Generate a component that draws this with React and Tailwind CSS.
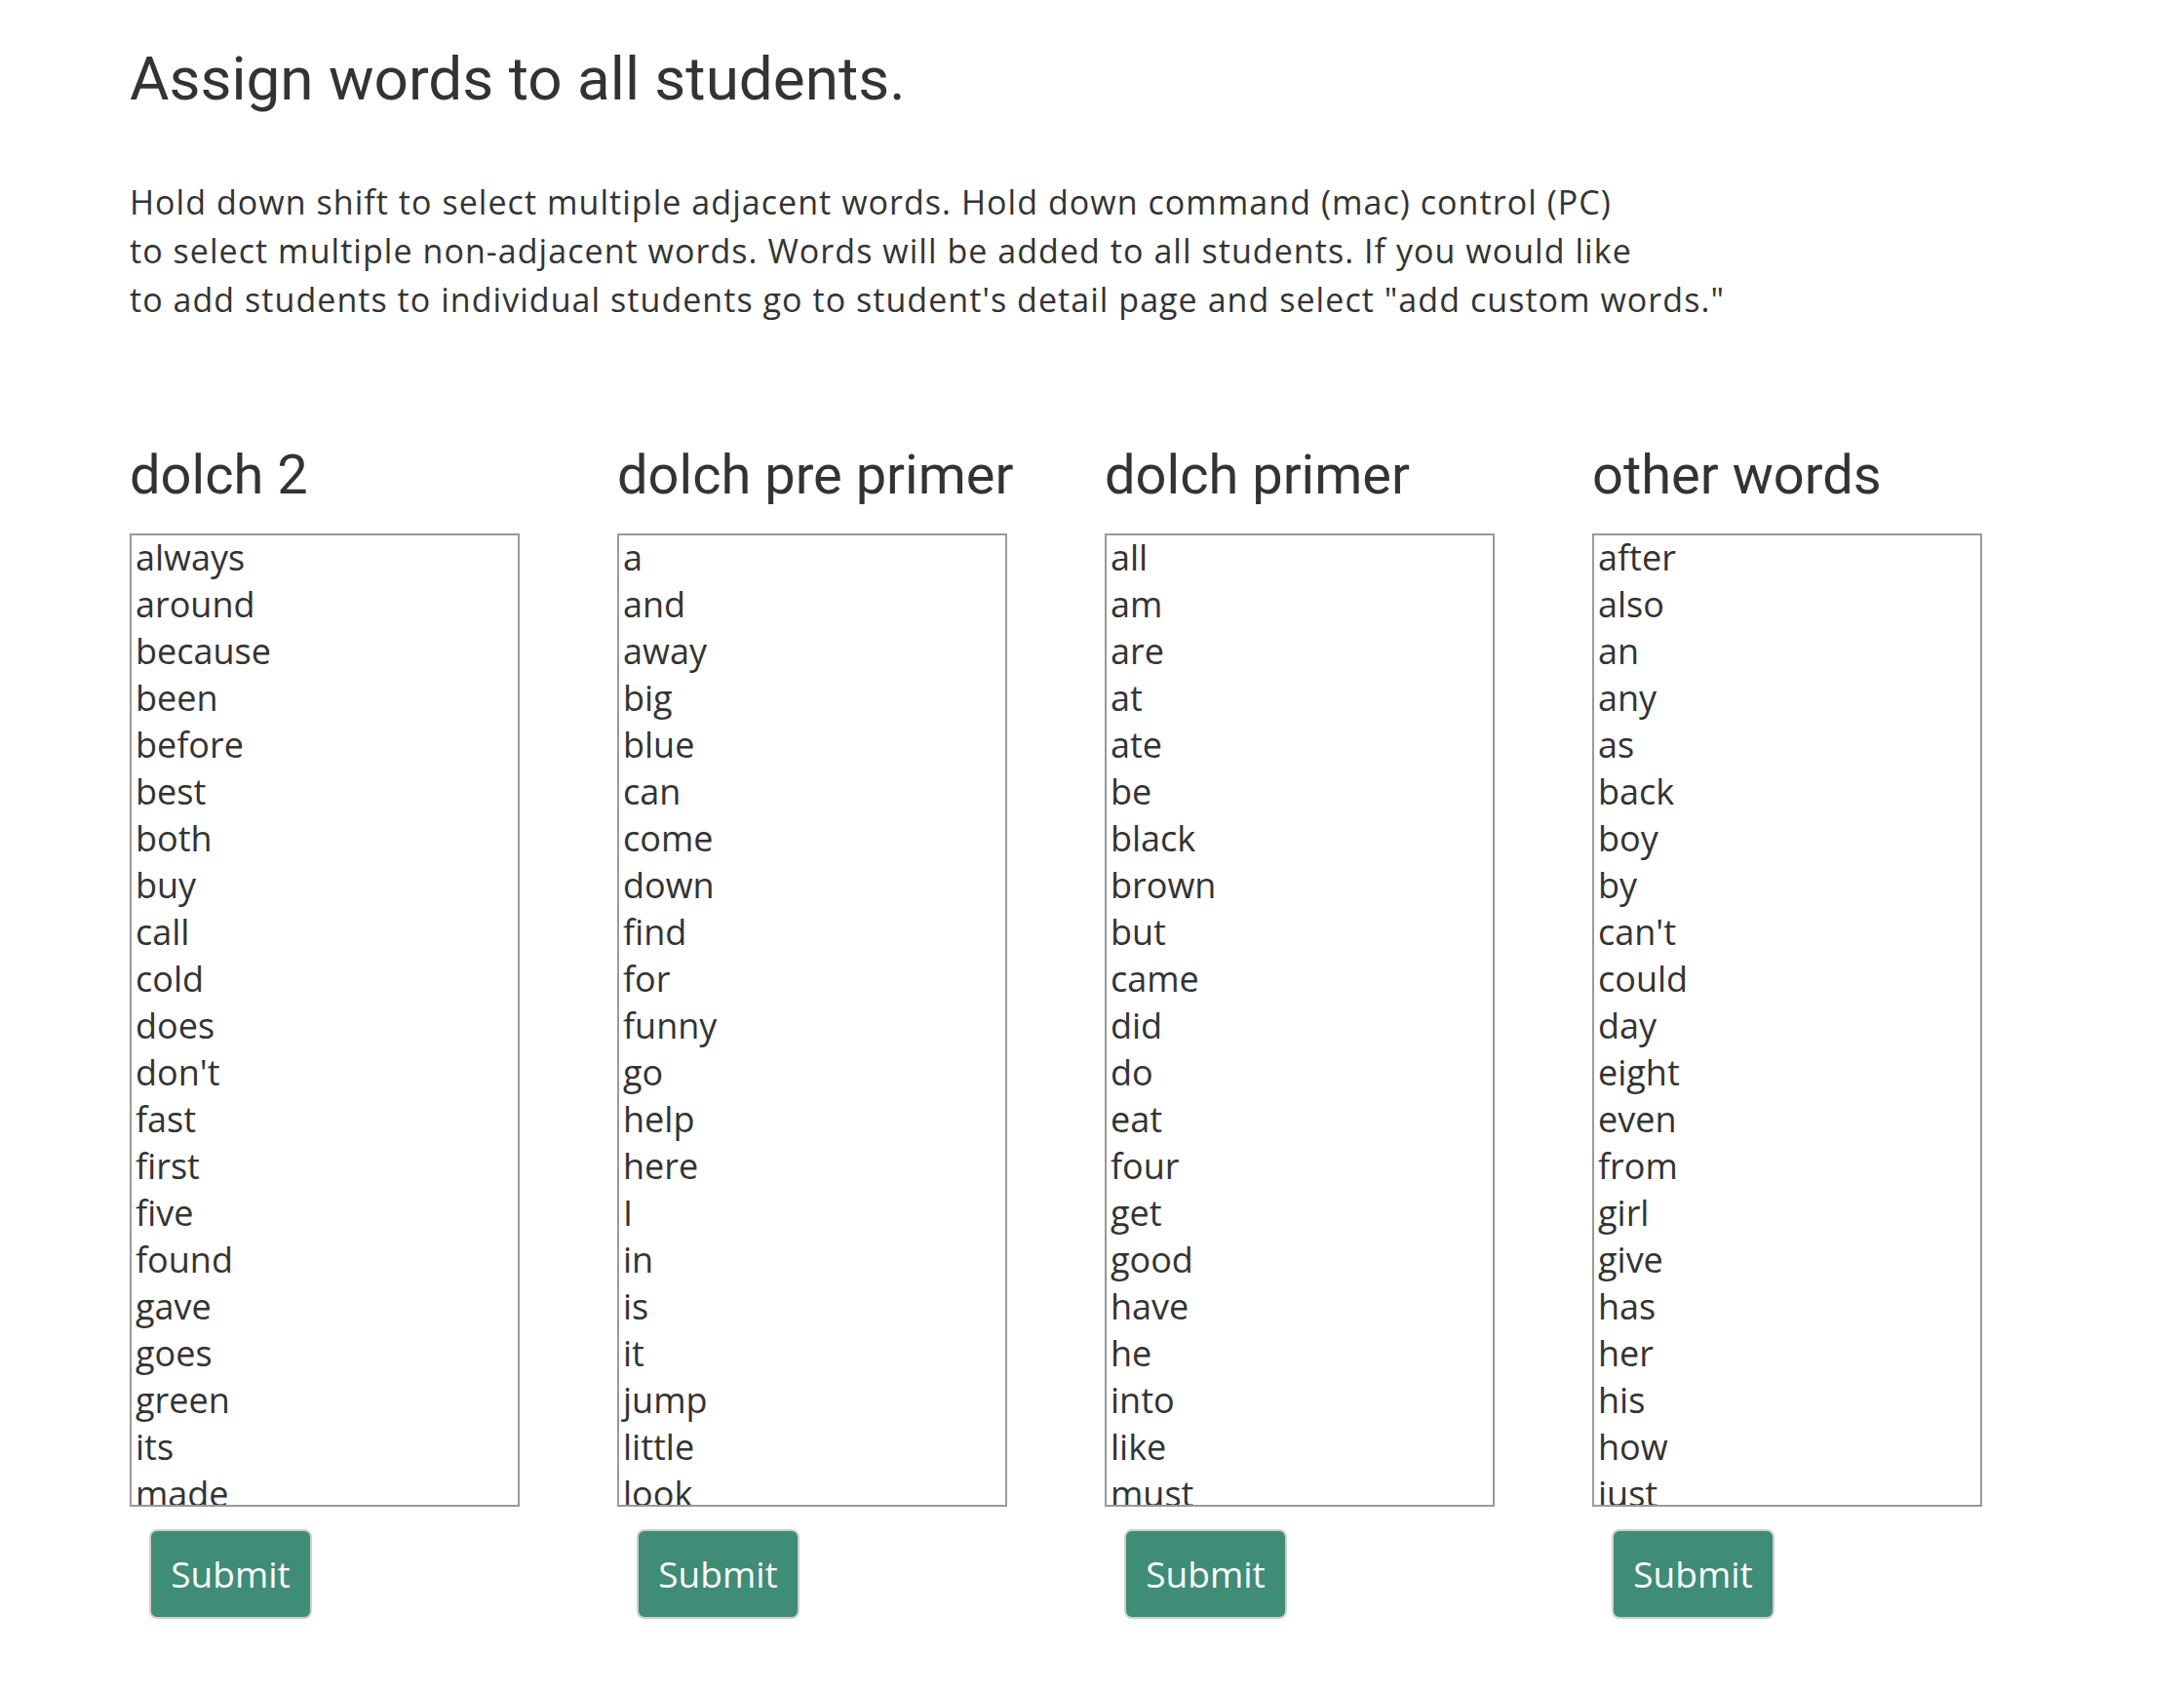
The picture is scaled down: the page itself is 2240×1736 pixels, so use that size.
import React from 'react';

const lists = [
  {
    title: 'dolch 2',
    words: ['always', 'around', 'because', 'been', 'before', 'best', 'both', 'buy', 'call', 'cold', 'does', "don't", 'fast', 'first', 'five', 'found', 'gave', 'goes', 'green', 'its', 'made', 'many', 'off', 'or', 'pull', 'read', 'right', 'sing', 'sit', 'sleep', 'tell', 'their', 'these', 'those', 'upon', 'us', 'use', 'very', 'wash', 'which', 'why', 'wish', 'work', 'would', 'write', 'your'],
  },
  {
    title: 'dolch pre primer',
    words: ['a', 'and', 'away', 'big', 'blue', 'can', 'come', 'down', 'find', 'for', 'funny', 'go', 'help', 'here', 'I', 'in', 'is', 'it', 'jump', 'little', 'look', 'make', 'me', 'my', 'not', 'one', 'play', 'red', 'run', 'said', 'see', 'the', 'three', 'to', 'two', 'up', 'we', 'where', 'yellow', 'you'],
  },
  {
    title: 'dolch primer',
    words: ['all', 'am', 'are', 'at', 'ate', 'be', 'black', 'brown', 'but', 'came', 'did', 'do', 'eat', 'four', 'get', 'good', 'have', 'he', 'into', 'like', 'must', 'new', 'no', 'now', 'on', 'our', 'out', 'please', 'pretty', 'ran', 'ride', 'saw', 'say', 'she', 'so', 'soon', 'that', 'there', 'they', 'this', 'too', 'under', 'want', 'was', 'well', 'went', 'what', 'white', 'who', 'will', 'with', 'yes'],
  },
  {
    title: 'other words',
    words: ['after', 'also', 'an', 'any', 'as', 'back', 'boy', 'by', "can't", 'could', 'day', 'eight', 'even', 'from', 'girl', 'give', 'has', 'her', 'his', 'how', 'just', 'know', 'let', 'live', 'may', 'of', 'old', 'once', 'open', 'over', 'put', 'round', 'some', 'stop', 'take', 'thank', 'them', 'then', 'think', 'walk', 'were', 'when'],
  },
];

const WordList = ({ title, words }) => {
  return (
    <div className="w-[500px] flex flex-col">
      <h2 className="text-[56px] leading-[52px] text-[#333] font-['Roboto',sans-serif]">{title}</h2>
      <div className="mt-[34px] w-[400px] h-[998px] border-2 border-[#999] overflow-hidden bg-white">
        {/* plain list instead of a native multi-select so the rows keep their size */}
        <ul className="px-[4px] -mt-px">
          {words.map((w) => (
            <li key={w} className="text-[36px] leading-[48px] text-[#333] font-['Open_Sans',sans-serif] cursor-default">
              {w}
            </li>
          ))}
        </ul>
      </div>
      <div className="pl-5 mt-[23px]">
        <button className="w-[167px] h-[92px] bg-[#3f8c77] border-2 border-[#cfcfcf] rounded-[8px] text-white text-[37px] font-['Open_Sans',sans-serif]">
          Submit
        </button>
      </div>
    </div>
  );
};

export default function App() {
  return (
    <div className="min-h-screen bg-white pl-[133px] pt-[47px] text-[#333]">
      <h1 className="text-[62px] leading-[67px] font-['Roboto',sans-serif]">
        Assign words to all students.
      </h1>
      <p className="mt-[68px] text-[34px] leading-[50px] tracking-[1.05px] font-['Open_Sans',sans-serif]">
        Hold down shift to select multiple adjacent words. Hold down command (mac) control (PC)
        <br />
        to select multiple non-adjacent words. Words will be added to all students. If you would like
        <br />
        to add students to individual students go to student's detail page and select "add custom words."
      </p>
      <div className="mt-[129px] flex">
        {lists.map((l) => (
          <WordList key={l.title} title={l.title} words={l.words} />
        ))}
      </div>
    </div>
  );
}
